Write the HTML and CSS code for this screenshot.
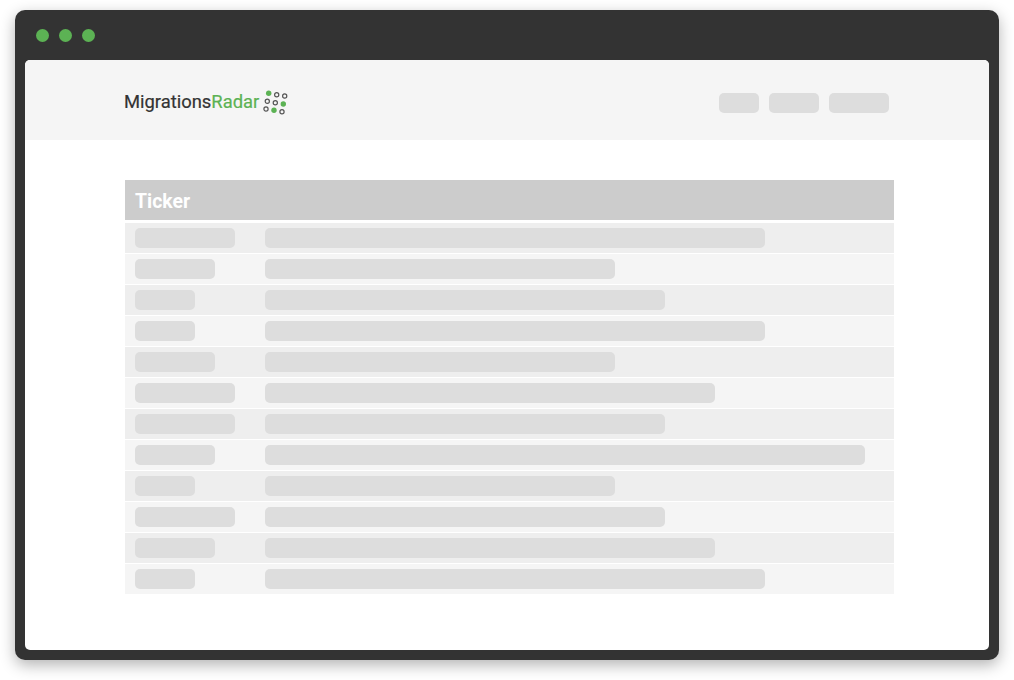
FILE: index.html
```html
<!DOCTYPE html>
<html lang="en">
<head>
  <meta charset="UTF-8">
  <meta name="viewport" content="width=device-width, initial-scale=1.0">
  <title>MigrationsRadar</title>
  <link rel="stylesheet" href="styles.css">
</head>
<body>
  <div class="window">
    <div class="window-bar">
      <span class="dot"></span>
      <span class="dot"></span>
      <span class="dot"></span>
    </div>
    <div class="window-page">
      <header class="header">
        <div class="logo">
          <span class="logo-text">Migrations<span class="logo-green">Radar</span></span>
          <svg class="logo-icon" width="26" height="26" viewBox="0 0 26 26">
            <circle class="on" cx="6.7" cy="4.3" r="2.7"/>
            <circle class="off" cx="14.7" cy="5.7" r="2.1"/>
            <circle class="off" cx="22.7" cy="7" r="2.1"/>
            <circle class="off" cx="5.3" cy="12.3" r="2.1"/>
            <circle class="off" cx="13.3" cy="13.7" r="2.1"/>
            <circle class="on" cx="21.3" cy="15" r="2.7"/>
            <circle class="off" cx="4" cy="20" r="2.1"/>
            <circle class="on" cx="12" cy="21.3" r="2.7"/>
            <circle class="off" cx="20" cy="22.7" r="2.1"/>
          </svg>
        </div>
        <nav class="nav">
          <span class="pill w40"></span>
          <span class="pill w50"></span>
          <span class="pill w60"></span>
        </nav>
      </header>
      <div class="ticker">
        <div class="ticker-head">Ticker</div>
        <div class="row"><span class="pill w100"></span><span class="pill w500"></span></div>
        <div class="row"><span class="pill w80"></span><span class="pill w350"></span></div>
        <div class="row"><span class="pill w60"></span><span class="pill w400"></span></div>
        <div class="row"><span class="pill w60"></span><span class="pill w500"></span></div>
        <div class="row"><span class="pill w80"></span><span class="pill w350"></span></div>
        <div class="row"><span class="pill w100"></span><span class="pill w450"></span></div>
        <div class="row"><span class="pill w100"></span><span class="pill w400"></span></div>
        <div class="row"><span class="pill w80"></span><span class="pill w600"></span></div>
        <div class="row"><span class="pill w60"></span><span class="pill w350"></span></div>
        <div class="row"><span class="pill w100"></span><span class="pill w400"></span></div>
        <div class="row"><span class="pill w80"></span><span class="pill w450"></span></div>
        <div class="row"><span class="pill w60"></span><span class="pill w500"></span></div>
      </div>
    </div>
  </div>
</body>
</html>
```

FILE: styles.css
```css
html, body {
  margin: 0;
  height: 680px;
  overflow: hidden;
  background-color: white;
}
body {
  padding: 10px 15px;
  box-sizing: border-box;
  font-family: Roboto, sans-serif;
}
.window {
  width: 984px;
  height: 650px;
  box-sizing: border-box;
  padding: 0 10px 10px;
  background-color: #333333;
  border-radius: 10px;
  box-shadow: 0 5px 15px rgba(0, 0, 0, 0.3);
  display: flex;
  flex-direction: column;
}
.window-bar {
  height: 50px;
  padding-left: 11px;
  display: flex;
  align-items: center;
  gap: 10px;
}
.dot {
  width: 13px;
  height: 13px;
  border-radius: 50%;
  background-color: #5cb254;
}
.window-page {
  flex: 1;
  background-color: white;
  border-radius: 5px;
  overflow: hidden;
}
.header {
  height: 80px;
  box-sizing: border-box;
  padding: 0 100px 0 99px;
  background-color: #f5f5f5;
  display: flex;
  align-items: center;
  justify-content: space-between;
}
.logo {
  display: flex;
  align-items: center;
  gap: 3px;
  margin-top: 4px;
}
.logo-text {
  font-size: 18.4px;
  color: #333333;
  -webkit-text-stroke: 0.2px #333333;
  margin-top: -2px;
}
.logo-green {
  color: #5cb254;
  -webkit-text-stroke: 0.2px #5cb254;
}
.logo-icon {
  display: block;
}
.logo-icon .on {
  fill: #5cb254;
}
.logo-icon .off {
  fill: none;
  stroke: #555555;
  stroke-width: 1.2;
}
.nav {
  display: flex;
  gap: 10px;
  margin-top: 6px;
}
.pill {
  display: block;
  height: 20px;
  background-color: #dddddd;
  border-radius: 5px;
}
.ticker {
  margin: 40px 95px 0 100px;
}
.ticker-head {
  height: 40px;
  line-height: 44px;
  padding-left: 10px;
  margin-bottom: 3px;
  background-color: #cccccc;
  color: white;
  font-size: 19.4px;
  font-weight: 700;
}
.row {
  height: 30px;
  margin-bottom: 1px;
  padding-left: 10px;
  box-sizing: border-box;
  display: grid;
  grid-template-columns: 130px 1fr;
  align-items: center;
  background-color: #f5f5f5;
}
.row:nth-child(even) {
  background-color: #eeeeee;
}
.w40 { width: 40px; }
.w50 { width: 50px; }
.w60 { width: 60px; }
.w80 { width: 80px; }
.w100 { width: 100px; }
.w350 { width: 350px; }
.w400 { width: 400px; }
.w450 { width: 450px; }
.w500 { width: 500px; }
.w600 { width: 600px; }
```
